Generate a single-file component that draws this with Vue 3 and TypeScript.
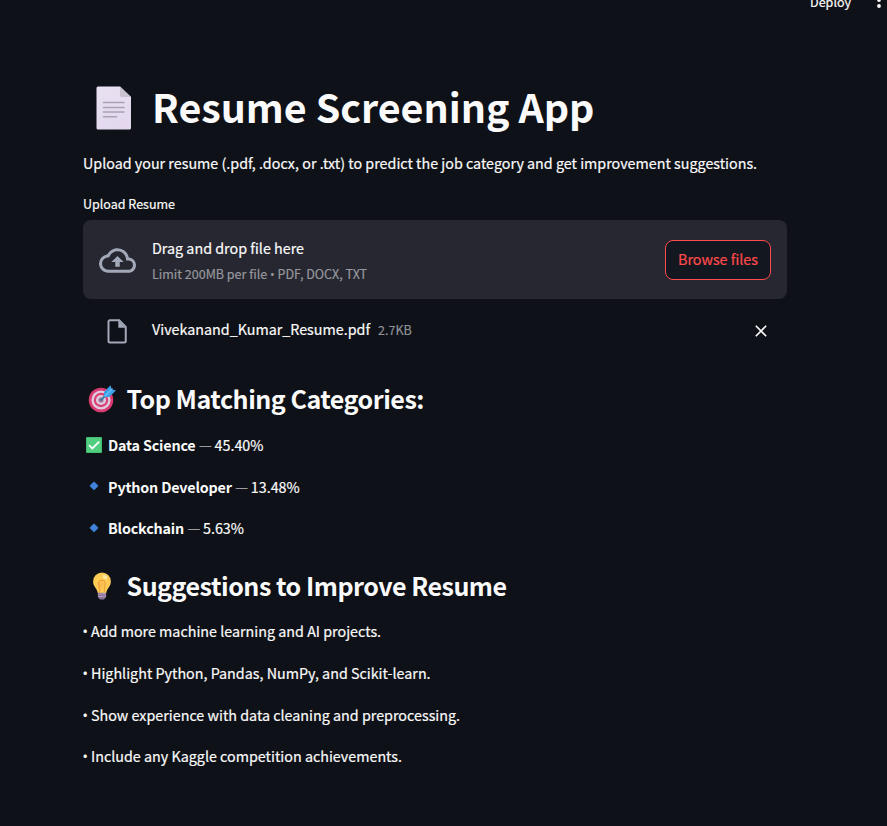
<script setup lang="ts">
interface Category {
  name: string
  score: string
  top: boolean
}

const categories: Category[] = [
  { name: 'Data Science', score: '45.40%', top: true },
  { name: 'Python Developer', score: '13.48%', top: false },
  { name: 'Blockchain', score: '5.63%', top: false },
]

const suggestions: string[] = [
  'Add more machine learning and AI projects.',
  'Highlight Python, Pandas, NumPy, and Scikit-learn.',
  'Show experience with data cleaning and preprocessing.',
  'Include any Kaggle competition achievements.',
]
</script>

<template>
  <div class="app">
    <header class="toolbar">
      <span class="deploy">Deploy</span>
      <svg class="kebab" viewBox="0 0 4 16" width="4" height="16">
        <circle cx="2" cy="2" r="1.9" /><circle cx="2" cy="8" r="1.9" /><circle cx="2" cy="14" r="1.9" />
      </svg>
    </header>

    <main class="content">
      <h1 class="title">
        <svg class="page-icon" viewBox="0 0 36 44" width="36" height="44">
          <defs>
            <linearGradient id="paper" x1="0" y1="0" x2="0.3" y2="1">
              <stop offset="0" stop-color="#e9e1f1" /><stop offset="1" stop-color="#e3d8ee" />
            </linearGradient>
          </defs>
          <path d="M2 0.5H24L35 11V42q0 1.5-1.500 1.500H2q-1.500 0-1.500-1.500V2Q.5.5 2 .5Z" fill="url(#paper)" />
          <path d="M24 .5L35 11H25.500Q24 11 24 9.500Z" fill="#c9c3d0" />
          <path d="M7.500 16.500H28M7.500 21.500H28M7.500 26H28M7.500 30.800H20.500" stroke="#aaa1b4" stroke-width="1.600" stroke-linecap="round" />
        </svg>
        <span>Resume Screening App</span>
      </h1>
      <p class="intro">Upload your resume (.pdf, .docx, or .txt) to predict the job category and get improvement suggestions.</p>

      <label class="field-label">Upload Resume</label>
      <section class="dropzone">
        <svg class="cloud" viewBox="0 0 24 24" width="37" height="37">
          <path d="M19.350 10.040A7.490 7.490 0 0 0 12 4C9.110 4 6.600 5.640 5.350 8.040A5.994 5.994 0 0 0 0 14c0 3.310 2.690 6 6 6h13c2.760 0 5-2.240 5-5 0-2.640-2.050-4.780-4.650-4.960zM19 18H6c-2.210 0-4-1.790-4-4 0-2.050 1.530-3.760 3.560-3.970l1.070-.110.500-.950A5.469 5.469 0 0 1 12 6c2.620 0 4.880 1.860 5.390 4.430l.300 1.500 1.530.110A2.980 2.980 0 0 1 22 15c0 1.650-1.350 3-3 3zM8 13h2.550v3h2.900v-3H16l-4-4z" />
        </svg>
        <div class="drop-text">
          <span class="drop-title">Drag and drop file here</span>
          <small class="drop-limit">Limit 200MB per file <span class="dot">•</span> PDF, DOCX, TXT</small>
        </div>
        <button class="browse" type="button"><span>Browse files</span></button>
      </section>

      <div class="file-row">
        <svg class="file-icon" viewBox="0 0 20 25" width="20" height="25">
          <path d="M3 1.250H12.200L18.750 7.800V22Q18.750 23.500 17.250 23.500H3Q1.500 23.500 1.500 22V2.750Q1.500 1.250 3 1.250Z" fill="none" stroke="#a3a8b8" stroke-width="2" />
          <path d="M11.300 1.500V8.700H18.500Z" fill="#a3a8b8" />
        </svg>
        <span class="file-name">Vivekanand_Kumar_Resume.pdf</span>
        <small class="file-size">2.7KB</small>
        <svg class="remove" viewBox="0 0 12 12" width="12" height="12">
          <path d="M.8.8L11.200 11.200M11.200.8L.8 11.200" stroke="#fafafa" stroke-width="1.600" />
        </svg>
      </div>

      <h2 class="heading">
        <svg class="heading-icon" viewBox="0 0 36 32" width="36" height="32">
          <circle cx="17" cy="18" r="12.300" fill="#d93a70" />
          <circle cx="17" cy="18" r="9.600" fill="#dfcbdf" />
          <circle cx="17" cy="18" r="7.200" fill="#dc3d72" />
          <circle cx="17" cy="18" r="5.100" fill="#dccbdd" />
          <circle cx="17" cy="18" r="2.500" fill="#a56c94" />
          <path d="M16.500 18.500L24.500 10.500" stroke="#347dab" stroke-width="1.800" />
          <path d="M20 14.500V10L26.600 3.200L27.600 7.200L32 8.400L25.200 15H20Z" fill="#3d9fe7" />
          <path d="M21 14L28.500 6.500" stroke="#65c5f7" stroke-width="1.300" />
        </svg>
        <span>Top Matching Categories:</span>
      </h2>
      <p v-for="category in categories" :key="category.name" class="category">
        <svg v-if="category.top" class="mark" viewBox="0 0 16 16" width="16" height="16">
          <rect width="16" height="16" rx=".8" fill="#43bd70" />
          <rect x="1" y="1" width="14" height="14" fill="#50cf80" />
          <path d="M3 8.200L6.300 11.500L13.200 4.600" fill="none" stroke="#fff" stroke-width="1.800" />
        </svg>
        <svg v-else class="mark" viewBox="0 0 16 16" width="16" height="16">
          <path d="M7.300 4.200Q8 3.500 8.700 4.200L11.700 7.200Q12.400 7.900 11.700 8.600L8.700 11.600Q8 12.300 7.300 11.600L4.300 8.600Q3.600 7.900 4.300 7.200Z" fill="#3f83da" stroke="#3f83da" stroke-width=".4" />
        </svg>
        <strong>{{ category.name }}</strong>
        <span class="score"><span class="dash">—</span> {{ category.score }}</span>
      </p>

      <h2 class="heading second">
        <svg class="heading-icon" viewBox="0 0 36 32" width="36" height="32">
          <defs>
            <radialGradient id="glow" cx=".45" cy=".6" r=".65">
              <stop offset="0" stop-color="#f9b64c" /><stop offset=".5" stop-color="#ffcf55" /><stop offset="1" stop-color="#f8c252" />
            </radialGradient>
          </defs>
          <path d="M19 2.500a8.900 8.900 0 0 0-8.900 8.900c0 5.200 3.900 6.500 4.700 11.600h8.400c.8-5.100 4.700-6.400 4.700-11.600A8.900 8.900 0 0 0 19 2.500Z" fill="url(#glow)" />
          <path d="M16.800 22L16 15.500Q14.500 10.500 19 10.300Q23.500 10.500 22 15.500L21.200 22" fill="none" stroke="#eb9e3b" stroke-width="1.100" />
          <ellipse cx="22" cy="7" rx="2.600" ry="1.800" transform="rotate(40 22 7)" fill="#fff0b5" opacity=".8" />
          <path d="M14.800 22.800H23.200V27L21 29.600H17L14.800 27Z" fill="#877095" />
          <path d="M15 24.300L23 23.600M15.200 26.700L23 26" stroke="#b8a3c2" stroke-width="1" />
        </svg>
        <span>Suggestions to Improve Resume</span>
      </h2>
      <p v-for="item in suggestions" :key="item" class="suggestion"><span class="bullet">•</span>{{ item }}</p>
    </main>
  </div>
</template>

<style>
body {
  margin: 0;
  background: #0e1117;
}
</style>

<style scoped>
.app {
  height: 826px;
  overflow: hidden;
  background: #0e1117;
  color: #fafafa;
  font-family: "Noto Sans CJK SC", "Open Sans", sans-serif;
  font-size: 14.320px;
  line-height: 25.600px;
  -webkit-text-stroke: 0.200px currentColor;
}
h1, h2, p { margin: 0; white-space: nowrap; }
h1, h2, strong { -webkit-text-stroke: 0; }
svg { flex: none; display: block; }
.toolbar {
  display: flex;
  justify-content: flex-end;
  height: 80px;
  padding-right: 6px;
}
.deploy { font-size: 12.530px; line-height: 20px; margin-top: -8px; }
.kebab { margin: -8px 0 0 26px; fill: #fafafa; }
.content { width: 704px; margin-left: 83px; }
.title {
  display: flex;
  align-items: center;
  height: 56px;
  font-size: 39.400px;
  font-weight: 700;
}
.title span { margin-top: -4px; }
.page-icon { margin: -1px 20.500px 0 12.500px; }
.intro { margin-top: 14px; }
.field-label { display: block; height: 24px; margin-top: 16.400px; font-size: 12.530px; line-height: 24px; }
.dropzone {
  display: flex;
  align-items: center;
  box-sizing: border-box;
  height: 79px;
  margin-top: 4px;
  padding: 1px 16px 0;
  border-radius: 8px;
  background: #262730;
}
.cloud { margin-top: 1px; fill: #a3a8b8; }
.drop-text { display: flex; flex-direction: column; margin-left: 16px; padding-top: 3px; flex: 1; }
.drop-limit { font-size: 12.530px; color: #96979c; }
.dot { font-family: "Open Sans", sans-serif; }
.browse {
  width: 106px;
  height: 40px;
  padding: 0 0 2px;
  border: 1px solid #ff4b4b;
  border-radius: 8px;
  background: #131720;
  color: #ff4b4b;
  font: inherit;
  white-space: nowrap;
}
.file-row { display: flex; align-items: center; height: 26px; margin-top: 18px; padding: 0 20px 0 24px; }
.file-icon { margin-top: 3px; }
.file-name { margin: -2px 0 0 25px; }
.file-size { margin-left: 8px; font-size: 12.530px; color: #8f9198; }
.remove { margin: 2px 0 0 auto; }
.heading {
  display: flex;
  align-items: center;
  height: 34px;
  margin: 39px 0 16px;
  font-size: 25.050px;
  font-weight: 600;
  letter-spacing: -0.490px;
}
.heading.second { margin: 28.500px 0 15.050px; }
.heading-icon { margin-right: 7.500px; }
.heading:not(.second) .heading-icon { margin: -1px 6.500px 0 1px; }
.category { display: flex; align-items: center; margin-bottom: 16px; }
.category strong { letter-spacing: -0.170px; }
.mark { margin: 0 6px 0 3px; }
.score { margin-left: 3.500px; }
.dash { color: #b2b3b6; margin-right: -0.500px; }
.suggestion { margin-bottom: 16px; }
.bullet { display: inline-block; width: 8px; font-family: "Open Sans", sans-serif; line-height: 1; text-indent: -0.500px; }
</style>
